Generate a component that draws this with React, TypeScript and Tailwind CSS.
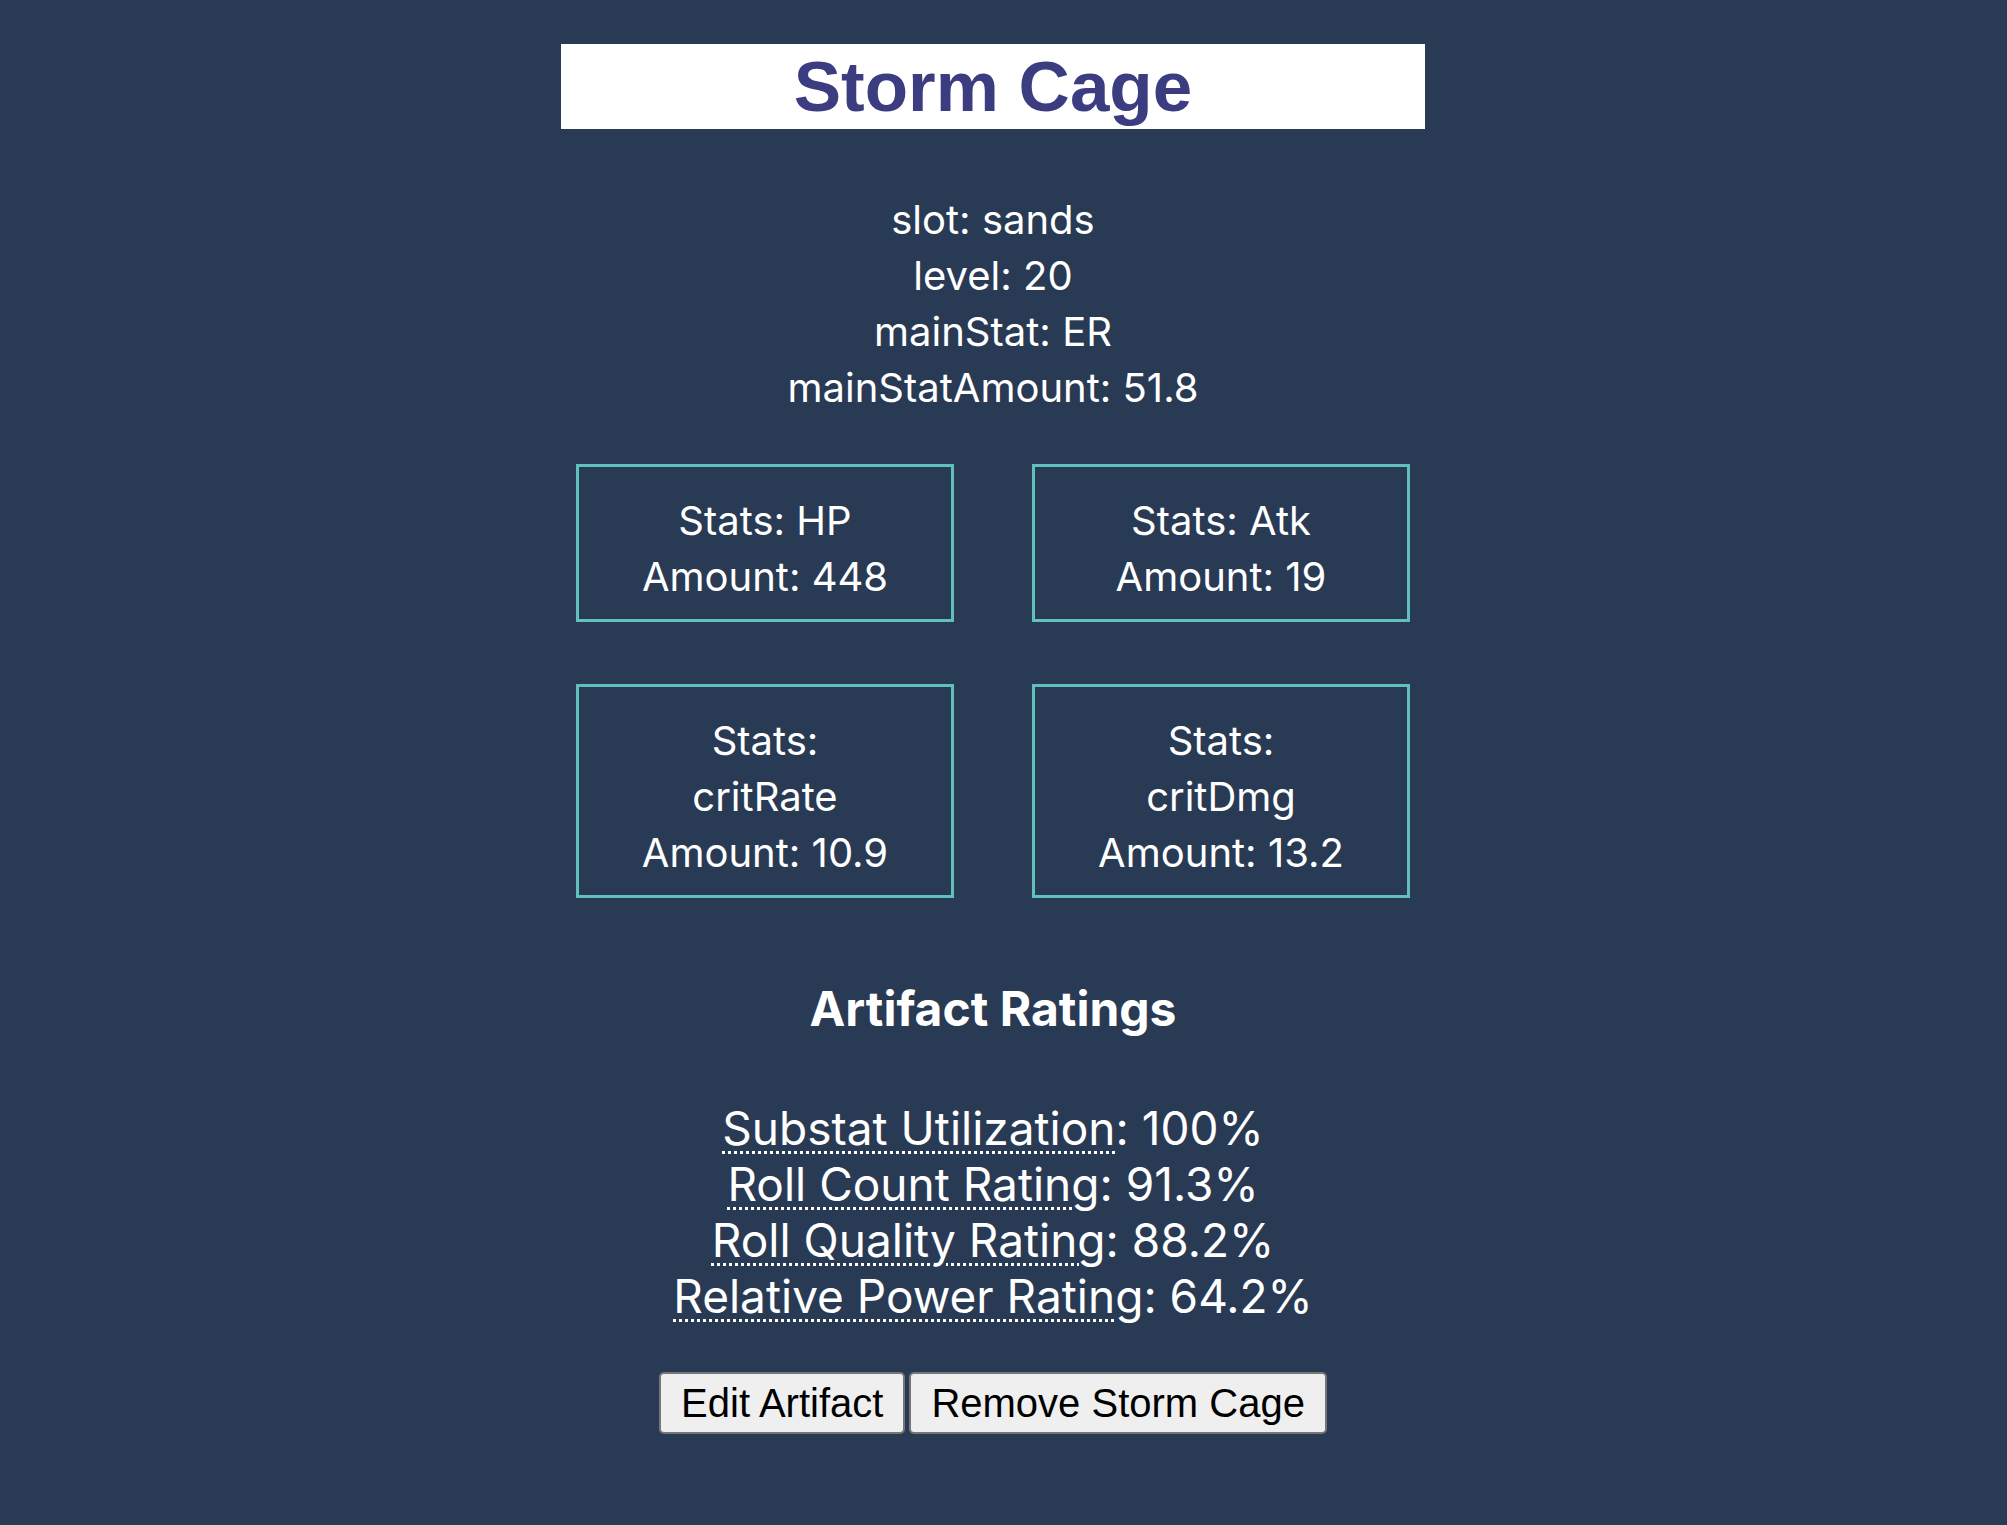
const stats = [
  { name: 'HP', amount: '448' },
  { name: 'Atk', amount: '19' },
  { name: 'critRate', amount: '10.9' },
  { name: 'critDmg', amount: '13.2' },
];

const ratings = [
  { label: 'Substat Utilization', value: '100%' },
  { label: 'Roll Count Rating', value: '91.3%' },
  { label: 'Roll Quality Rating', value: '88.2%' },
  { label: 'Relative Power Rating', value: '64.2%' },
];

function StatBox({ name, amount }: { name: string; amount: string }) {
  return (
    <div className="border-[3px] border-[#5fc0bc] px-[61px] pt-[26px] pb-[14px] text-center">
      <div>Stats: {name}</div>
      <div>Amount: {amount}</div>
    </div>
  );
}

export default function App() {
  return (
    <div className="min-h-screen bg-[#293a54] text-white font-['Inter',sans-serif] text-[40px] leading-[56px] pr-[21px]">
      <div className="flex flex-col items-center pt-[44px] pb-[90px]">
        <h1 className="w-[864px] bg-white text-center text-[#3c3c80] font-['Liberation_Sans',Arial,sans-serif] font-bold text-[71px] leading-[85px]">
          Storm Cage
        </h1>

        <div className="mt-[63px] text-center">
          <div>slot: sands</div>
          <div>level: 20</div>
          <div>mainStat: ER</div>
          <div>mainStatAmount: 51.8</div>
        </div>

        <div className="mt-[48px] grid grid-cols-[378px_378px] gap-x-[78px] gap-y-[62px]">
          {stats.map((s) => (
            <StatBox key={s.name} name={s.name} amount={s.amount} />
          ))}
        </div>

        <h2 className="mt-[83px] font-bold text-[48px] leading-[56px]">Artifact Ratings</h2>

        <div className="mt-[63px] text-center text-[46px] leading-[56px]">
          {ratings.map((r) => (
            <div key={r.label}>
              <abbr className="underline decoration-dotted decoration-[3px] underline-offset-[6px]" title={r.label}>
                {r.label}
              </abbr>
              : {r.value}
            </div>
          ))}
        </div>

        <div className="mt-[48px] flex gap-[4px] font-['Liberation_Sans',Arial,sans-serif] text-[40px] leading-[46px] text-black">
          <button className="bg-[#efefef] border-2 border-[#767676] rounded-[5px] px-[20px] py-[6px]">
            Edit Artifact
          </button>
          <button className="bg-[#efefef] border-2 border-[#767676] rounded-[5px] px-[20px] py-[6px]">
            Remove Storm Cage
          </button>
        </div>
      </div>
    </div>
  );
}
